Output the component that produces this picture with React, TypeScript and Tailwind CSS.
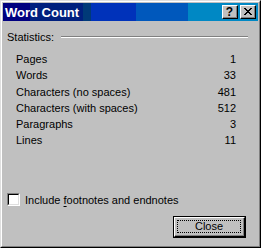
const stats = [
  { label: "Pages", value: "1" },
  { label: "Words", value: "33" },
  { label: "Characters (no spaces)", value: "481" },
  { label: "Characters (with spaces)", value: "512" },
  { label: "Paragraphs", value: "3" },
  { label: "Lines", value: "11" },
];

function TitleButton({ children }: { children: React.ReactNode }) {
  return (
    <div className="h-[14px] w-[16px] border-b border-r border-t border-l border-b-black border-r-black border-t-white border-l-white bg-[#c0c0c0]">
      <div className="flex h-full w-full items-center justify-center border-b border-r border-b-[#808080] border-r-[#808080]">
        {children}
      </div>
    </div>
  );
}

export default function App() {
  return (
    <div
      className="h-[248px] w-[261px] border-b border-l border-r border-t border-b-black border-l-[#dfdfdf] border-r-black border-t-[#dfdfdf] bg-[#c0c0c0] text-[11px] text-black"
      style={{ fontFamily: '"Liberation Sans", Arial, sans-serif' }}
    >
      <div className="flex h-full flex-col border-b border-l border-r border-t border-b-[#808080] border-l-white border-r-[#808080] border-t-white p-px">
        {/* title bar */}
        <div className="flex h-[18px] items-center justify-between bg-[linear-gradient(to_right,#000080_0_27px,#00207e_27px_80px,#003a78_80px_88px,#0032ba_88px_133px,#0058bc_133px_185px,#0088c4_185px)] pl-[2px] pr-[2px]">
          <span className="text-[13px] font-bold leading-none text-white">Word Count</span>
          <div className="flex gap-[2px]">
            <TitleButton>
              <span className="text-[12px] font-bold leading-none">?</span>
            </TitleButton>
            <TitleButton>
              <svg width="8" height="7" viewBox="0 0 8 7" shapeRendering="crispEdges">
                <path d="M0 0h2v1h-2zM6 0h2v1h-2zM1 1h2v1h-2zM5 1h2v1h-2zM2 2h4v1h-4zM3 3h2v1h-2zM2 4h4v1h-4zM1 5h2v1h-2zM5 5h2v1h-2zM0 6h2v1h-2zM6 6h2v1h-2z" fill="black" />
              </svg>
            </TitleButton>
          </div>
        </div>

        {/* statistics group */}
        <div className="flex flex-1 flex-col px-[4px]">
          <div className="mt-[10px] flex items-center">
            <span className="leading-[12px]">Statistics:</span>
            <div className="ml-[7px] mr-[6px] flex-1 border-b border-t border-b-white border-t-[#808080]" />
          </div>

          <div className="ml-[9px] mr-[18px] mt-[8px] flex flex-col">
            {stats.map((s) => (
              <div key={s.label} className="flex h-[16.3px] items-center justify-between">
                <span>{s.label}</span>
                <span>{s.value}</span>
              </div>
            ))}
          </div>

          <div className="mt-auto flex items-center">
            <div className="h-[13px] w-[13px] border-l border-t border-b border-r border-l-[#808080] border-t-[#808080] border-b-white border-r-white">
              <div className="h-full w-full border-l border-t border-b border-r border-l-black border-t-black border-b-[#dfdfdf] border-r-[#dfdfdf] bg-white" />
            </div>
            <span className="ml-[5px]">
              Include <span className="underline underline-offset-2">f</span>ootnotes and endnotes
            </span>
          </div>

          <div className="mb-[7px] mt-[8px] flex justify-end pr-[8px]">
            <div className="h-[22px] w-[73px] border border-black">
              <div className="h-full w-full border-b border-l border-r border-t border-b-black border-l-white border-r-black border-t-white">
                <div className="flex h-full w-full items-center justify-center border-b border-r border-b-[#808080] border-r-[#808080] p-[2px]">
                  <div className="flex h-full w-full items-center justify-center border border-dotted border-black">
                    Close
                  </div>
                </div>
              </div>
            </div>
          </div>
        </div>
      </div>
    </div>
  );
}
